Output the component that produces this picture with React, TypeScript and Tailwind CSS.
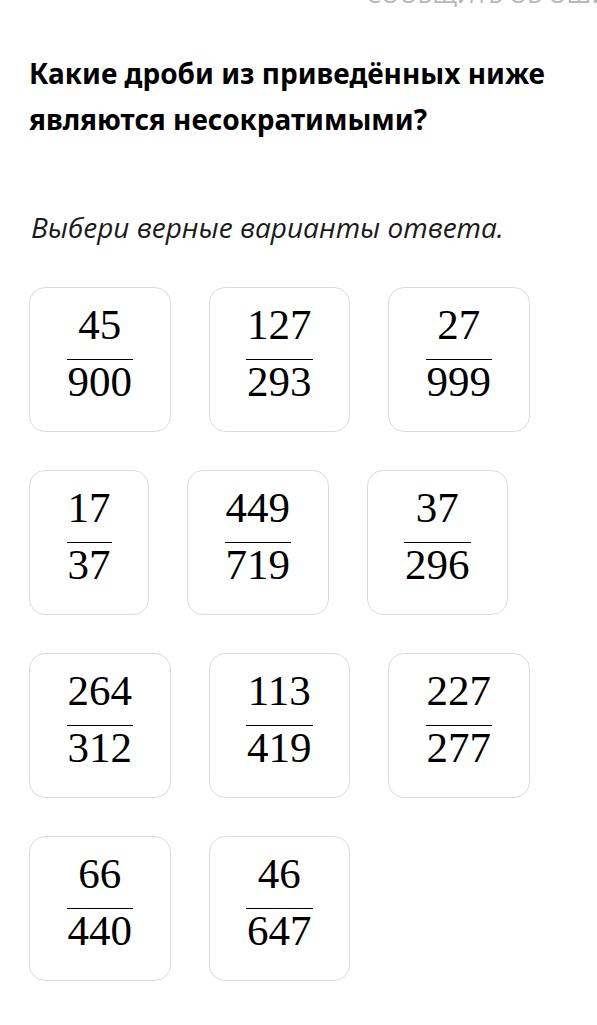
import React from "react";

type Frac = { num: string; den: string };

const FRACTIONS: Frac[] = [
  { num: "45", den: "900" },
  { num: "127", den: "293" },
  { num: "27", den: "999" },
  { num: "17", den: "37" },
  { num: "449", den: "719" },
  { num: "37", den: "296" },
  { num: "264", den: "312" },
  { num: "113", den: "419" },
  { num: "227", den: "277" },
  { num: "66", den: "440" },
  { num: "46", den: "647" },
];

function FractionCard({ num, den }: Frac) {
  return (
    <button
      type="button"
      className="flex h-[145px] flex-col items-center rounded-2xl border-[1.5px] border-[#dcdcdc] bg-white px-[36.5px] pt-[15px]"
    >
      <div className="flex flex-col items-stretch font-['Liberation_Serif',serif] text-[43px] leading-[43px] text-black">
        <span className="px-[1px] text-center">{num}</span>
        <span className="mt-[13px] h-px bg-black" />
        <span className="px-[1px] text-center">{den}</span>
      </div>
    </button>
  );
}

export default function App() {
  return (
    <div className="min-h-[1025px] w-[597px] overflow-hidden bg-white font-['Noto_Sans',sans-serif]">
      <div className="-mt-[20px] whitespace-nowrap pl-[366px] text-[24px] uppercase leading-[27px] text-[#b8b8b8]">
        Сообщить об ошибке
      </div>

      <div className="px-[29px]">
        <h1 className="mt-[43px] text-[28px] font-bold leading-[46px] text-black">
          Какие дроби из приведённых ниже являются несократимыми?
        </h1>

        <p className="mt-[69px] pl-[2px] font-['Open_Sans',sans-serif] text-[28px] italic leading-[32px] text-[#1a1a1a]">
          Выбери верные варианты ответа.
        </p>

        <div className="mt-[44px] flex flex-wrap gap-[38px]">
          {FRACTIONS.map((f) => (
            <FractionCard key={f.num + "/" + f.den} num={f.num} den={f.den} />
          ))}
        </div>
      </div>
    </div>
  );
}
